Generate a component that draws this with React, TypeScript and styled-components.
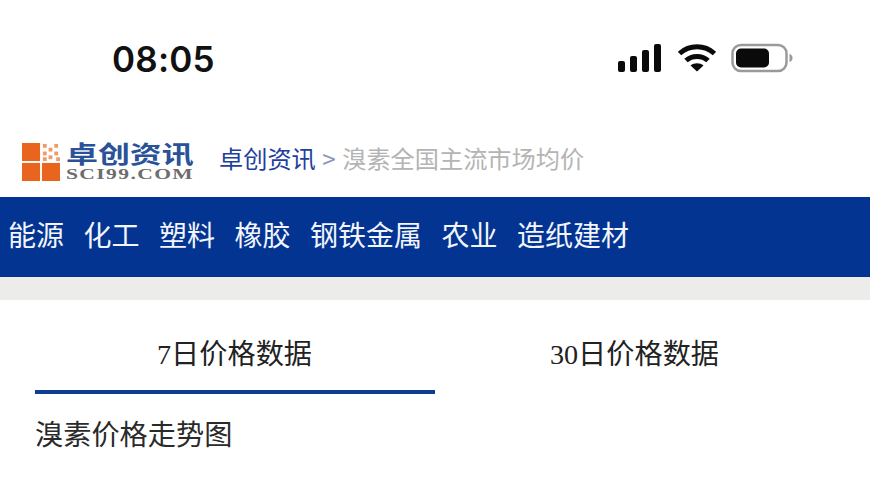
import React from "react";
import styled, { createGlobalStyle } from "styled-components";

const Global = createGlobalStyle`
  html, body { margin: 0; padding: 0; background: #fff; }
  body { width: 870px; height: 492px; overflow: hidden; font-family: "Noto Sans CJK SC", "Noto Sans", sans-serif; }
`;
const Page = styled.div`
  width: 870px; height: 492px; overflow: hidden; display: flex; flex-direction: column; background: #fff;
`;
const StatusBar = styled.div`
  height: 118px; flex: none; display: flex; justify-content: space-between; align-items: flex-start;
  padding: 38px 77px 0 112px; box-sizing: border-box;
`;
const Clock = styled.div`
  font: 600 35px/42px Inter, sans-serif; color: #111; letter-spacing: 0.2px;
`;
const StatusIcons = styled.div`
  display: flex; align-items: center; gap: 14.5px; height: 42px; margin-top: -1px;
`;
const Header = styled.div`
  height: 79px; flex: none; display: flex; align-items: center; padding: 4px 0 0 22px; box-sizing: border-box;
`;
const Logo = styled.div`
  display: flex; align-items: center; gap: 6px; width: 197px; flex: none; margin-top: 4px;
`;
const LogoText = styled.div`
  display: flex; flex-direction: column; width: 128px; margin-top: -1px;
`;
const LogoCn = styled.div`
  font: 700 24px/24px "Noto Sans CJK SC", sans-serif; color: #2a5298; white-space: nowrap;
  transform: scaleX(1.33); transform-origin: left center;
`;
const LogoEn = styled.div`
  font: 700 15.5px/14px "Liberation Serif", serif; color: #6d6d6d; white-space: nowrap; letter-spacing: 1px;
  margin-top: 2px; transform: scaleX(1.39); transform-origin: left center;
`;
const Crumb = styled.div`
  font-size: 24.2px; line-height: 32px; color: #b4b4b4; white-space: nowrap; margin-top: -3px;
`;
const CrumbLink = styled.span`color: #1f3f9c;`;
const CrumbSep = styled.span`color: #8a96b8; margin: 0 6.5px;`;
const Nav = styled.nav`
  height: 80px; flex: none; background: #033491; display: flex; align-items: center; gap: 19.5px; padding: 0 0 6px 8px; box-sizing: border-box;
`;
const NavItem = styled.span`
  font-size: 28px; color: #f2f5fb; white-space: nowrap;
`;
const Divider = styled.div`height: 23px; flex: none; background: #ececea;`;
const Tabs = styled.div`
  display: flex; padding: 0 35px; height: 94px; flex: none;
`;
const Tab = styled.div<{ $active?: boolean }>`
  width: 400px; flex: none; box-sizing: border-box; text-align: center; padding: 32px 1px 0 0;
  font-size: 28.2px; line-height: 40px; color: #222; white-space: nowrap;
  font-family: "Liberation Serif", "Noto Sans CJK SC", serif;
  border-bottom: 4px solid ${p => (p.$active ? "#0f3d92" : "transparent")};
`;
const Cn = styled.span`font-family: "Noto Sans CJK SC", sans-serif;`;
const Title = styled.div`
  font-size: 28.2px; line-height: 40px; color: #2a2a2a; padding: 19px 0 0 35px; white-space: nowrap;
`;

const LogoMark = () => (
  <svg width="38" height="38" viewBox="0 0 40 40">
    <rect x="0" y="0" width="19" height="19" fill="#e8641f" />
    <rect x="0" y="21" width="19" height="19" fill="#e8641f" />
    <rect x="21" y="21" width="19" height="19" fill="#e8641f" />
    {[[22,1],[28,5],[34,1],[22,9],[34,9],[28,13],[22,15],[36,15]].map(([x, y]) => (
      <rect key={`${x}-${y}`} x={x} y={y} width="4" height="4" fill="#ee9a6a" />
    ))}
  </svg>
);

const Signal = () => (
  <svg width="44" height="30" viewBox="0 0 44 30" fill="#0a0a0a">
    <rect x="0" y="18" width="7" height="11" rx="2" />
    <rect x="12" y="13" width="7" height="16" rx="2" />
    <rect x="24" y="7" width="7" height="22" rx="2" />
    <rect x="36" y="1" width="7" height="28" rx="2" />
  </svg>
);

const Wifi = () => (
  <svg width="40" height="30" viewBox="0 0 40 30" fill="none" stroke="#0a0a0a" strokeWidth="5">
    <path d="M2.5 10.5C12.5 1.5 27.5 1.5 37.5 10.5" />
    <path d="M9 17.5C15 12 25 12 31 17.5" />
    <path d="M20 28.5L13.5 22.5C17 19.5 23 19.5 26.5 22.5Z" fill="#0a0a0a" stroke="none" />
  </svg>
);

const Battery = () => (
  <svg width="62" height="30" viewBox="0 0 62 30">
    <rect x="1.5" y="2" width="54" height="26" rx="8.5" fill="none" stroke="#9a9a9a" strokeWidth="2.5" />
    <rect x="5" y="5.5" width="33" height="19" rx="5" fill="#0a0a0a" />
    <path d="M58.5 11c2 .5 3 2 3 4s-1 3.5-3 4z" fill="#9a9a9a" />
  </svg>
);

const navItems = ["能源", "化工", "塑料", "橡胶", "钢铁金属", "农业", "造纸建材"];

export default function App() {
  return (
    <Page>
      <Global />
      <StatusBar>
        <Clock>08:05</Clock>
        <StatusIcons>
          <Signal />
          <Wifi />
          <Battery />
        </StatusIcons>
      </StatusBar>
      <Header>
        <Logo>
          <LogoMark />
          <LogoText>
            <LogoCn>卓创资讯</LogoCn>
            <LogoEn>SCI99.COM</LogoEn>
          </LogoText>
        </Logo>
        <Crumb>
          <CrumbLink>卓创资讯</CrumbLink>
          <CrumbSep>&gt;</CrumbSep>
          溴素全国主流市场均价
        </Crumb>
      </Header>
      <Nav>
        {navItems.map(n => (
          <NavItem key={n}>{n}</NavItem>
        ))}
      </Nav>
      <Divider />
      <Tabs>
        <Tab $active>7<Cn>日价格数据</Cn></Tab>
        <Tab>30<Cn>日价格数据</Cn></Tab>
      </Tabs>
      <Title>溴素价格走势图</Title>
    </Page>
  );
}
